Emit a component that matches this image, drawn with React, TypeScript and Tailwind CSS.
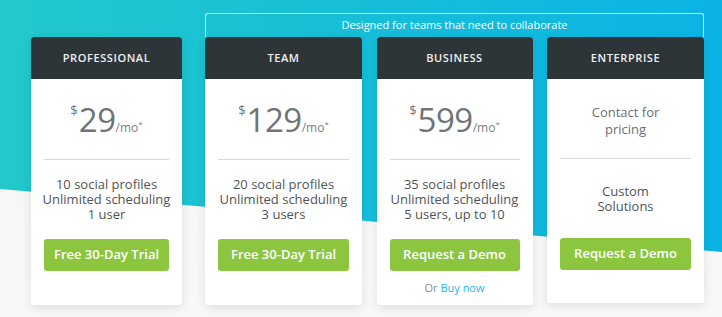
import React from 'react';

type Plan = {
  name: string;
  price?: string;
  contact?: string[];
  features: string[];
  cta: string;
  buyNow?: boolean;
  width: string;
};

const font = { fontFamily: '"Open Sans", "Noto Sans", sans-serif' };

function Lines({ items }: { items: string[] }) {
  return (
    <p className="text-center">
      {items.map((l, i) => (
        <React.Fragment key={l}>
          {i > 0 && <br />}
          {l}
        </React.Fragment>
      ))}
    </p>
  );
}

function Price({ value }: { value: string }) {
  return (
    <div className="flex items-start text-[#6e7477]">
      <span className="text-[13px] leading-none mt-[1px] mr-[1px]">$</span>
      <span className="text-[33px] leading-none tracking-[-0.5px]">{value}</span>
      <span className="text-[12px] leading-none self-end mb-[2px] text-[#7a8083]">/mo</span>
      <span className="text-[8px] leading-none self-end mb-[8px] text-[#7a8083]">*</span>
    </div>
  );
}

function PlanCard({ plan }: { plan: Plan }) {
  const isContact = !!plan.contact;
  return (
    <div
      className={`${plan.width} ${isContact ? 'h-[266px]' : 'h-[268px]'} bg-white rounded-[3px] overflow-hidden shadow-[0_3px_10px_rgba(0,0,0,0.10)] flex flex-col`}
    >
      <div className="h-[42px] bg-[#2e3538] flex items-center justify-center">
        <span className="text-[11px] font-semibold tracking-[0.6px] text-[#eef0f0]">{plan.name}</span>
      </div>

      <div className={`${isContact ? 'h-[79px]' : 'h-[80px]'} flex items-center justify-center`}>
        {plan.price ? (
          <Price value={plan.price} />
        ) : (
          <div className="mt-[5px] text-[13px] leading-[17px] text-[#6b6f71]">
            <Lines items={plan.contact!} />
          </div>
        )}
      </div>

      <div className="mx-[13px] h-px bg-[#d8d8d8]" />

      <div className="h-[79px] flex items-center justify-center text-[13px] leading-[15px] text-[#505456]">
        <Lines items={plan.features} />
      </div>

      <button className="mx-[13px] h-[32px] rounded-[3px] bg-[#8cc63f] text-white text-[13px] font-semibold">
        {plan.cta}
      </button>

      {plan.buyNow && (
        <div className="mt-[9px] text-center text-[11px] text-[#8a8e90]">
          Or <span className="text-[#2bb6e9]">Buy now</span>
        </div>
      )}
    </div>
  );
}

const professional: Plan = {
  name: 'PROFESSIONAL',
  price: '29',
  features: ['10 social profiles', 'Unlimited scheduling', '1 user'],
  cta: 'Free 30-Day Trial',
  width: 'w-[151px]',
};

const teamPlans: Plan[] = [
  {
    name: 'TEAM',
    price: '129',
    features: ['20 social profiles', 'Unlimited scheduling', '3 users'],
    cta: 'Free 30-Day Trial',
    width: 'w-[157px]',
  },
  {
    name: 'BUSINESS',
    price: '599',
    features: ['35 social profiles', 'Unlimited scheduling', '5 users, up to 10'],
    cta: 'Request a Demo',
    buyNow: true,
    width: 'w-[156px]',
  },
  {
    name: 'ENTERPRISE',
    contact: ['Contact for', 'pricing'],
    features: ['Custom', 'Solutions'],
    cta: 'Request a Demo',
    width: 'w-[157px]',
  },
];

export default function App() {
  return (
    <div className="relative w-[722px] h-[317px] overflow-hidden bg-gradient-to-b from-[#f4f4f4] to-[#f8f8f8]" style={font}>
      {/* teal diagonal backdrop */}
      <div className="absolute inset-0 bg-gradient-to-r from-[#22c8cb] to-[#0ab3e4] [clip-path:polygon(0_0,100%_0,100%_252px,0_189px)]" />

      <div className="relative flex items-start pl-[31px] pt-[13px]">
        <div className="mt-[24px]">
          <PlanCard plan={professional} />
        </div>

        <div className="ml-[23px] w-[499px]">
          <div className="h-[24px] border border-b-0 border-white/80 rounded-t-[3px] flex items-center justify-center text-[11px] text-white">
            Designed for teams that need to collaborate
          </div>
          <div className="flex items-start justify-between">
            {teamPlans.map((p) => (
              <PlanCard key={p.name} plan={p} />
            ))}
          </div>
        </div>
      </div>
    </div>
  );
}
